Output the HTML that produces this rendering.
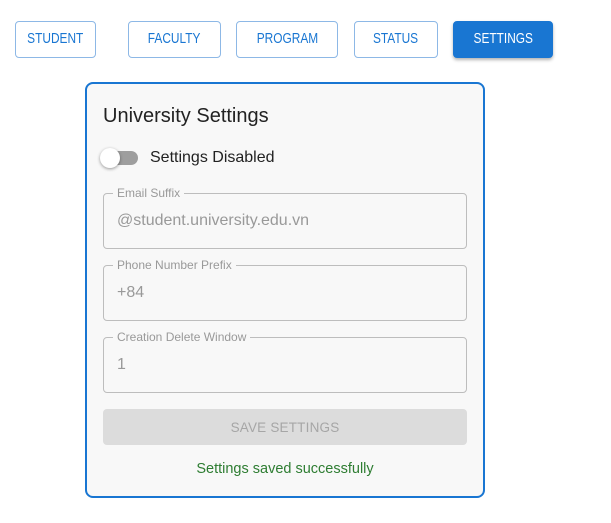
<!DOCTYPE html>
<html><head><style>
*{box-sizing:border-box;margin:0;padding:0}
body{width:611px;height:523px;background:#fff;font-family:"Liberation Sans",sans-serif;position:relative;overflow:hidden}
.b{position:absolute;top:21px;height:37px;border:1px solid #8db8e6;border-radius:4px;color:#1976d2;font-size:14.5px;display:flex;align-items:center;justify-content:center;padding-bottom:2px}
.b i{font-style:normal;display:inline-block;transform:scaleX(.82);white-space:nowrap}
.b.a{background:#1976d2;color:#fff;border-color:#1976d2;box-shadow:0 2px 3px rgba(0,0,0,.3)}
.card{position:absolute;left:85px;top:82px;width:400px;height:416px;border:2px solid #1976d2;border-radius:8px;background:#f8f8f8}
.t{position:absolute;left:103px;top:105px;font-size:20px;color:#222}
.track{position:absolute;left:104px;top:151px;width:34px;height:14px;border-radius:7px;background:#9e9e9e}
.thumb{position:absolute;left:100px;top:148px;width:20px;height:20px;border-radius:50%;background:#fff;box-shadow:0 1px 3px rgba(0,0,0,.4)}
.sd{position:absolute;left:150px;top:149px;font-size:16px;color:#222}
.f{position:absolute;left:103px;width:364px;height:56px;border:1px solid #bdbdbd;border-radius:4px}
.f span{position:absolute;top:-8px;left:9px;padding:0 4px;background:#f8f8f8;font-size:12px;color:#999;line-height:14px}
.f div{position:absolute;left:13px;top:18px;font-size:16px;color:#999}
.save{position:absolute;left:103px;top:409px;width:364px;height:36px;background:#dcdcdc;border-radius:4px;color:#a6a6a6;font-size:13.5px;display:flex;align-items:center;justify-content:center;letter-spacing:.2px}
.ok{position:absolute;left:85px;width:400px;top:461px;text-align:center;font-size:14.5px;color:#2e7d32}
</style></head><body>
<div class="b" style="left:15px;width:81px"><i>STUDENT</i></div>
<div class="b" style="left:128px;width:93px"><i>FACULTY</i></div>
<div class="b" style="left:236px;width:102px"><i>PROGRAM</i></div>
<div class="b" style="left:354px;width:84px"><i>STATUS</i></div>
<div class="b a" style="left:453px;width:100px"><i>SETTINGS</i></div>
<div class="card"></div>
<div class="t">University Settings</div>
<div class="track"></div><div class="thumb"></div>
<div class="sd">Settings Disabled</div>
<div class="f" style="top:193px"><span>Email Suffix</span><div>@student.university.edu.vn</div></div>
<div class="f" style="top:265px"><span>Phone Number Prefix</span><div>+84</div></div>
<div class="f" style="top:337px"><span>Creation Delete Window</span><div>1</div></div>
<div class="save">SAVE SETTINGS</div>
<div class="ok">Settings saved successfully</div>
</body></html>
